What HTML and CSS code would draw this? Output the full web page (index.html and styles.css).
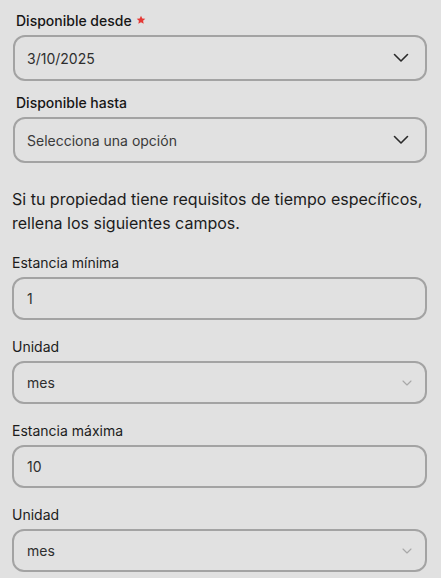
FILE: index.html
```html
<!DOCTYPE html>
<html lang="es">
<head>
<meta charset="utf-8">
<title>Disponibilidad</title>
<link rel="stylesheet" href="styles.css">
</head>
<body>
<main class="form">
  <section class="dates">
    <div class="field field-top">
      <label class="label label-strong">Disponible desde <svg class="star" viewBox="0 0 24 24" width="10" height="10"><path d="M12 1.5l3.1 6.6 7.2.9-5.3 5 1.4 7.1L12 17.6 5.6 21.1 7 14l-5.3-5 7.2-.9z" fill="#e53935"/></svg></label>
      <div class="box box-top">
        <span class="value">3/10/2025</span>
        <svg class="chev" viewBox="0 0 16 10" width="16" height="10"><path d="M1.5 1.5L8 8l6.5-6.5" fill="none" stroke="#2a2a2a" stroke-width="1.6" stroke-linecap="round" stroke-linejoin="round"/></svg>
      </div>
    </div>
    <div class="field field-top">
      <label class="label label-strong">Disponible hasta</label>
      <div class="box box-top">
        <span class="value placeholder">Selecciona una opción</span>
        <svg class="chev" viewBox="0 0 16 10" width="16" height="10"><path d="M1.5 1.5L8 8l6.5-6.5" fill="none" stroke="#2a2a2a" stroke-width="1.6" stroke-linecap="round" stroke-linejoin="round"/></svg>
      </div>
    </div>
  </section>

  <p class="intro">Si tu propiedad tiene requisitos de tiempo específicos, rellena los siguientes campos.</p>

  <section class="stay">
    <div class="field">
      <label class="label">Estancia mínima</label>
      <div class="box"><span class="value">1</span></div>
    </div>
    <div class="field">
      <label class="label">Unidad</label>
      <div class="box">
        <span class="value">mes</span>
        <svg class="chev-small" viewBox="0 0 10 6" width="10" height="6"><path d="M1 1l4 4 4-4" fill="none" stroke="#a8a8a8" stroke-width="1.1" stroke-linecap="round" stroke-linejoin="round"/></svg>
      </div>
    </div>
    <div class="field">
      <label class="label">Estancia máxima</label>
      <div class="box"><span class="value">10</span></div>
    </div>
    <div class="field">
      <label class="label">Unidad</label>
      <div class="box">
        <span class="value">mes</span>
        <svg class="chev-small" viewBox="0 0 10 6" width="10" height="6"><path d="M1 1l4 4 4-4" fill="none" stroke="#a8a8a8" stroke-width="1.1" stroke-linecap="round" stroke-linejoin="round"/></svg>
      </div>
    </div>
  </section>
</main>
</body>
</html>
```

FILE: styles.css
```css
* { box-sizing: border-box; }
html, body {
  margin: 0;
  background: #e1e1e1;
}
body {
  font-family: Inter, "Noto Sans", "Liberation Sans", sans-serif;
  color: #1c1c1c;
}
.form {
  width: 441px;
  padding: 11px 14px 0 12px;
}
.dates {
  display: flex;
  flex-direction: column;
  gap: 12px;
  padding-left: 1px;
}
.field {
  display: flex;
  flex-direction: column;
  gap: 4px;
}
.label {
  font-size: 14px;
  line-height: 20px;
  display: flex;
  align-items: center;
  gap: 4px;
}
.label-strong {
  font-weight: 500;
  padding-left: 3px;
  color: #161616;
}
.star { margin-top: -2px; }
.box {
  height: 43px;
  border: 2px solid #a3a3a3;
  border-radius: 12px;
  display: flex;
  align-items: center;
  justify-content: space-between;
  padding: 0 13px 0 13px;
}
.box-top {
  height: 46px;
  padding: 0 16px 0 12px;
}
.value {
  font-size: 14px;
  color: #2e2e2e;
}
.placeholder { color: #3a3a3a; }
.intro {
  margin: 24px 0 18px;
  font-size: 16px;
  line-height: 24px;
  color: #1c1c1c;
}
.stay {
  display: flex;
  flex-direction: column;
  gap: 17px;
}
```
